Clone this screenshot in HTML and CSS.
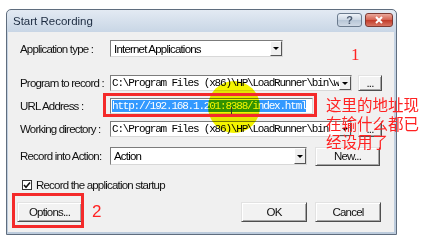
FILE: index.html
```html
<!DOCTYPE html>
<html lang="en">
<head>
  <meta charset="UTF-8" />
  <title>Start Recording</title>
  <link rel="stylesheet" href="styles.css">
</head>
<body>
  <div class="window">
    <div class="titlebar">
      <span class="title">Start Recording</span>
      <div class="caption-btns">
        <span class="cap help">?</span>
        <span class="cap close">
          <svg width="10" height="8" viewBox="0 0 10 8"><path d="M2 1 L8 7 M8 1 L2 7" stroke="#fff" stroke-width="2"/></svg>
        </span>
      </div>
    </div>

    <div class="content">
      <div class="row row-app">
        <span class="lbl">Application type :</span>
        <div class="field combo w-app">
          <span class="val">Internet Applications</span>
          <span class="drop"><i></i></span>
        </div>
      </div>

      <div class="row row-prog">
        <span class="lbl">Program to record :</span>
        <div class="field combo w-long">
          <span class="val mono">C:\Program Files (x86)\HP\LoadRunner\bin\wplus_init_wsock.exe</span>
          <span class="drop"><i></i></span>
        </div>
        <button class="btn dots">...</button>
      </div>

      <div class="row row-url">
        <span class="lbl">URL Address :</span>
        <div class="field w-url">
          <span class="val mono"><span class="sel">http://192.168.1.201:8388/index.html</span></span>
        </div>
      </div>

      <div class="row row-dir">
        <span class="lbl">Working directory :</span>
        <div class="field combo w-long">
          <span class="val mono">C:\Program Files (x86)\HP\LoadRunner\bin</span>
          <span class="drop"><i></i></span>
        </div>
        <button class="btn dots">...</button>
      </div>

      <div class="row row-action">
        <span class="lbl">Record into Action:</span>
        <div class="field combo w-action">
          <span class="val">Action</span>
          <span class="drop"><i></i></span>
        </div>
        <button class="btn new">New...</button>
      </div>

      <div class="row row-check">
        <span class="checkbox">
          <svg width="8" height="8" viewBox="0 0 8 8"><path d="M1 4 L3 6.2 L7 1.5" stroke="#111" stroke-width="1.6" fill="none"/></svg>
        </span>
        <span class="check-lbl">Record the application startup</span>
      </div>

      <div class="row row-btns">
        <button class="btn options">Options...</button>
        <span class="spacer"></span>
        <button class="btn ok">OK</button>
        <button class="btn cancel">Cancel</button>
      </div>
    </div>
  </div>

  <!-- annotations drawn over the dialog -->
  <div class="spot"></div>
  <div class="ibeam"></div>
  <div class="mark mark-url"></div>
  <div class="mark mark-opt"></div>
  <span class="note note-1">1</span>
  <span class="note note-2">2</span>
  <div class="note note-cn">这里的地址现<br>在输什么都已<br>经设用了</div>
</body>
</html>
```

FILE: styles.css
```css
body {
  margin: 0;
  padding: 9px 0 0 6px;
  height: 243px;
  box-sizing: border-box;
  overflow: hidden;
  position: relative;
  background: #fff;
  font-family: "Liberation Sans", Arial, sans-serif;
}

.window {
  width: 391px;
  height: 226px;
  box-sizing: border-box;
  border: 1px solid #5f6d7e;
  border-radius: 5px 5px 0 0;
  background: linear-gradient(#e3eaf3, #c6d4e4 24px, #bccbdc);
  padding: 0 2px 2px 1px;
  display: flex;
  flex-direction: column;
}

.titlebar {
  height: 22px;
  display: flex;
  justify-content: space-between;
  align-items: flex-start;
}
.title {
  margin: 5px 0 0 5px;
  font-size: 11.5px;
  color: #1c2b40;
}
.caption-btns {
  display: flex;
  gap: 3px;
  margin: 3px 1px 0 0;
}
.cap {
  height: 14px;
  box-sizing: border-box;
  border: 1px solid #6b7b8e;
  border-radius: 3px;
  display: flex;
  align-items: center;
  justify-content: center;
}
.help {
  width: 25px;
  background: linear-gradient(#eef3f9, #cbd6e3 50%, #b6c5d6 51%, #cfd9e5);
  color: #4a5a70;
  font-size: 11px;
  font-weight: bold;
}
.close {
  width: 28px;
  border-color: #7d3a33;
  background: linear-gradient(#eba99c, #d3604f 50%, #c13a28 51%, #d77563);
}

.content {
  flex: 1;
  background: #f0f0f0;
  padding-top: 8px;
}

.row {
  display: flex;
  align-items: center;
  padding-left: 12px;
}
.lbl {
  width: 90px;
  font-size: 11.5px;
  letter-spacing: -0.8px;
  color: #111;
  white-space: nowrap;
}
.row-app { height: 17px; }
.row-prog { height: 16px; margin-top: 18px; }
.row-url { height: 16px; margin-top: 7px; }
.row-dir { height: 16px; margin-top: 7px; }
.row-action { height: 18px; margin-top: 10px; }

.field {
  height: 100%;
  box-sizing: border-box;
  background: #fff;
  border: 1px solid;
  border-color: #7c7c7c #d8d8d8 #d8d8d8 #7c7c7c;
  display: flex;
  align-items: center;
  overflow: hidden;
}
.w-app { width: 173px; }
.w-long { width: 242px; }
.w-url { width: 203px; }
.w-action { width: 197px; }

.val {
  flex: 1;
  padding-left: 3px;
  font-size: 11.5px;
  letter-spacing: -0.8px;
  white-space: nowrap;
  overflow: hidden;
}
.mono {
  padding-left: 1px;
  font-family: "Liberation Mono", "Courier New", monospace;
  font-size: 11px;
  letter-spacing: -1.2px;
}
.sel {
  background: #3399ff;
  color: #fff;
}

.drop {
  width: 12px;
  height: 100%;
  box-sizing: border-box;
  flex-shrink: 0;
  background: #f0f0f0;
  border: 1px solid;
  border-color: #fff #555 #555 #fff;
  display: flex;
  align-items: center;
  justify-content: center;
}
.drop i {
  border-left: 3px solid transparent;
  border-right: 3px solid transparent;
  border-top: 3px solid #000;
}

.btn {
  box-sizing: border-box;
  padding: 0;
  background: #f2f2f2;
  border: 1px solid;
  border-color: #e2e2e2 #4e4e4e #4e4e4e #e2e2e2;
  box-shadow: inset 1px 1px #fff, inset -1px -1px #a6a6a6;
  font-family: "Liberation Sans", Arial, sans-serif;
  font-size: 11.5px;
  letter-spacing: -0.8px;
  color: #111;
}
.dots { width: 24px; height: 16px; margin-left: 6px; }
.new { width: 65px; height: 19px; margin-left: 8px; }

.row-check {
  height: 10px;
  margin-top: 15px;
  padding-left: 14px;
}
.checkbox {
  width: 10px;
  height: 10px;
  box-sizing: border-box;
  border: 1px solid #333;
  background: #fff;
  display: flex;
  align-items: center;
  justify-content: center;
}
.check-lbl {
  margin-left: 4px;
  font-size: 11.5px;
  letter-spacing: -0.8px;
  color: #111;
}

.row-btns {
  height: 20px;
  margin-top: 12px;
  padding-left: 9px;
  padding-right: 13px;
}
.options, .ok, .cancel { width: 66px; height: 20px; }
.options { width: 65px; }
.spacer { flex: 1; }
.cancel { margin-left: 8px; }

/* annotations */
.spot {
  position: absolute;
  left: 208px;
  top: 81px;
  width: 52px;
  height: 52px;
  border-radius: 50%;
  background: #f4f400;
  mix-blend-mode: multiply;
}
.ibeam {
  position: absolute;
  left: 231px;
  top: 107px;
  width: 1px;
  height: 9px;
  background: #333;
}
.mark {
  position: absolute;
  box-sizing: border-box;
  border: 3px solid #f42a2a;
}
.mark-url { left: 103px; top: 93px; width: 214px; height: 24px; }
.mark-opt { left: 12px; top: 193px; width: 72px; height: 35px; }

.note {
  position: absolute;
  color: #f22;
}
.note-1 {
  left: 351px;
  top: 45px;
  font-family: "Liberation Serif", serif;
  font-size: 17px;
}
.note-2 {
  left: 92px;
  top: 202px;
  font-size: 17px;
}
.note-cn {
  left: 326px;
  top: 95px;
  font-family: "Noto Sans CJK SC", sans-serif;
  font-size: 15.5px;
  line-height: 18.5px;
}
```
